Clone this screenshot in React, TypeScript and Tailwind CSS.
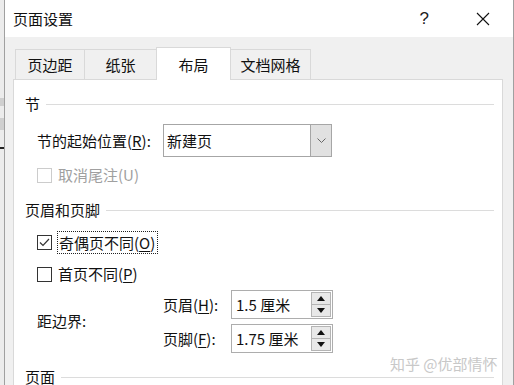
import React from 'react'

const U = ({ c }: { c: string }) => <span className="underline underline-offset-2">{c}</span>

const Section = ({ title, className = '' }: { title: string; className?: string }) => (
    <div className={`flex h-[20px] items-center pl-[11px] pr-[8px] ${className}`}>
        <span className="leading-[20px]">{title}</span>
        <div className="ml-[6px] h-px flex-1 bg-[#dcdcdc]" />
    </div>
)

const Check = ({ checked, disabled }: { checked?: boolean; disabled?: boolean }) => (
    <div
        className={`flex h-[15px] w-[15px] shrink-0 items-center justify-center border bg-white ${
            disabled ? 'border-[#cccccc]' : 'border-[#333333]'
        }`}
    >
        {checked && (
            <svg width="11" height="9" viewBox="0 0 11 9">
                <path d="M1 4.5 L4 7.5 L10 1" fill="none" stroke="#333" strokeWidth="1.2" />
            </svg>
        )}
    </div>
)

const Spin = ({ value }: { value: string }) => (
    <div className="flex h-[29px] w-[102px] items-stretch border border-[#adadad] bg-white">
        <div className="flex flex-1 items-center pl-[4px] leading-[20px]">{value}</div>
        <div className="my-px mr-px flex w-[20px] flex-col">
            <div className="flex flex-1 items-center justify-center border border-[#b4b4b4] bg-[#e8e8e8]">
                <svg width="8" height="5" viewBox="0 0 8 5">
                    <path d="M0 5 L4 0 L8 5 Z" fill="#111" />
                </svg>
            </div>
            <div className="flex flex-1 items-center justify-center border border-t-0 border-[#b4b4b4] bg-[#e8e8e8]">
                <svg width="8" height="5" viewBox="0 0 8 5">
                    <path d="M0 0 L8 0 L4 5 Z" fill="#111" />
                </svg>
            </div>
        </div>
    </div>
)

const App = () => {
    return (
        <div className="relative flex h-[385px] w-[514px] overflow-hidden font-['Noto_Sans_CJK_SC','Noto_Sans',sans-serif] text-[15px] text-[#111]">
            {/* app behind */}
            <div className="flex w-[4px] shrink-0 flex-col bg-[#ececec]">
                <div className="mt-[98px] h-[8px] shrink-0 bg-[#cfcfcf]" />
                <div className="mt-[12px] h-[12px] shrink-0 bg-[#cfcfcf]" />
                <div className="mt-[17px] h-[2px] shrink-0 bg-[#222]" />
            </div>
            {/* dialog */}
            <div className="flex flex-1 flex-col overflow-hidden border-x border-[#a0a0a0] bg-[#f0f0f0]">
                {/* TITLE */}
                <div className="flex h-[37px] shrink-0 items-center bg-white pl-[8px]">
                    <span className="leading-[20px]">页面设置</span>
                    <span className="ml-auto mr-[47px] font-['Liberation_Sans',sans-serif] text-[17px] leading-[20px] text-[#222]">?</span>
                    <svg className="mr-[23px]" width="14" height="14" viewBox="0 0 14 14">
                        <path d="M1 1 L13 13 M13 1 L1 13" stroke="#111" strokeWidth="1.1" />
                    </svg>
                </div>
                {/* TABS */}
                <div className="ml-[8px] w-[490px] shrink-0 pt-[10px]">
                    <div className="relative z-10 -mb-px flex items-end pl-[2px]">
                        <div className="mb-px flex h-[30px] w-[70px] items-center justify-center border-x border-t border-[#d9d9d9] leading-[20px]">
                            页边距
                        </div>
                        <div className="mb-px flex h-[30px] w-[71px] items-center justify-center border-t border-[#d9d9d9] leading-[20px]">
                            纸张
                        </div>
                        <div className="flex h-[33px] w-[75px] items-center justify-center border-x border-t border-[#d9d9d9] bg-white pt-[2px] leading-[20px]">
                            布局
                        </div>
                        <div className="mb-px flex h-[30px] w-[80px] items-center justify-center border-r border-t border-[#d9d9d9] leading-[20px]">
                            文档网格
                        </div>
                    </div>
                    {/* PANEL */}
                    <div className="h-[320px] border border-[#d9d9d9] bg-white">
                        <Section title="节" className="mt-[14px]" />
                        <div className="mt-[10px] flex items-center pl-[23px]">
                            <div className="w-[126px] leading-[20px]">
                                节的起始位置(<U c="R" />):
                            </div>
                            <div className="flex h-[33px] w-[169px] border border-[#a6a6a6] bg-white">
                                <div className="flex flex-1 items-center pl-[3px] leading-[20px]">新建页</div>
                                <div className="flex w-[21px] items-center justify-center border-l border-[#a6a6a6] bg-[#e1e1e1]">
                                    <svg width="9" height="5" viewBox="0 0 9 5">
                                        <path d="M0.5 0.5 L4.5 4.5 L8.5 0.5" fill="none" stroke="#666" strokeWidth="1" />
                                    </svg>
                                </div>
                            </div>
                        </div>
                        <div className="mt-[8px] flex h-[20px] items-center gap-[6px] pl-[23px] text-[#a0a0a0]">
                            <Check disabled />
                            <span className="leading-[20px]">取消尾注(U)</span>
                        </div>
                        <Section title="页眉和页脚" className="mt-[15px]" />
                        <div className="mt-[11px] flex h-[23px] items-center gap-[5px] pl-[23px]">
                            <Check checked />
                            <span className="flex h-[23px] items-center border border-dotted border-[#222] pl-px pr-[2px] leading-[20px]">
                                奇偶页不同(<U c="O" />)
                            </span>
                        </div>
                        <div className="mt-[10px] flex h-[20px] items-center gap-[6px] pl-[23px]">
                            <Check />
                            <span className="leading-[20px]">
                                首页不同(<U c="P" />)
                            </span>
                        </div>
                        <div className="mt-[6px] flex items-center pl-[23px]">
                            <div className="w-[126px] pb-[2px] leading-[20px]">距边界:</div>
                            <div className="flex flex-col gap-[5px]">
                                <div className="flex items-center">
                                    <div className="w-[68px] leading-[20px]">
                                        页眉(<U c="H" />):
                                    </div>
                                    <Spin value="1.5 厘米" />
                                </div>
                                <div className="flex items-center">
                                    <div className="w-[68px] leading-[20px]">
                                        页脚(<U c="F" />):
                                    </div>
                                    <Spin value="1.75 厘米" />
                                </div>
                            </div>
                        </div>
                        <Section title="页面" className="mt-[14px]" />
                    </div>
                </div>
            </div>
            {/* watermark */}
            <div className="absolute left-[390px] top-[354px] text-[15px] leading-[20px] text-[#c8c8c8] [text-shadow:0_0_1px_#ffffff]">
                知乎 @优部情怀
            </div>
        </div>
    )
}

export default App
